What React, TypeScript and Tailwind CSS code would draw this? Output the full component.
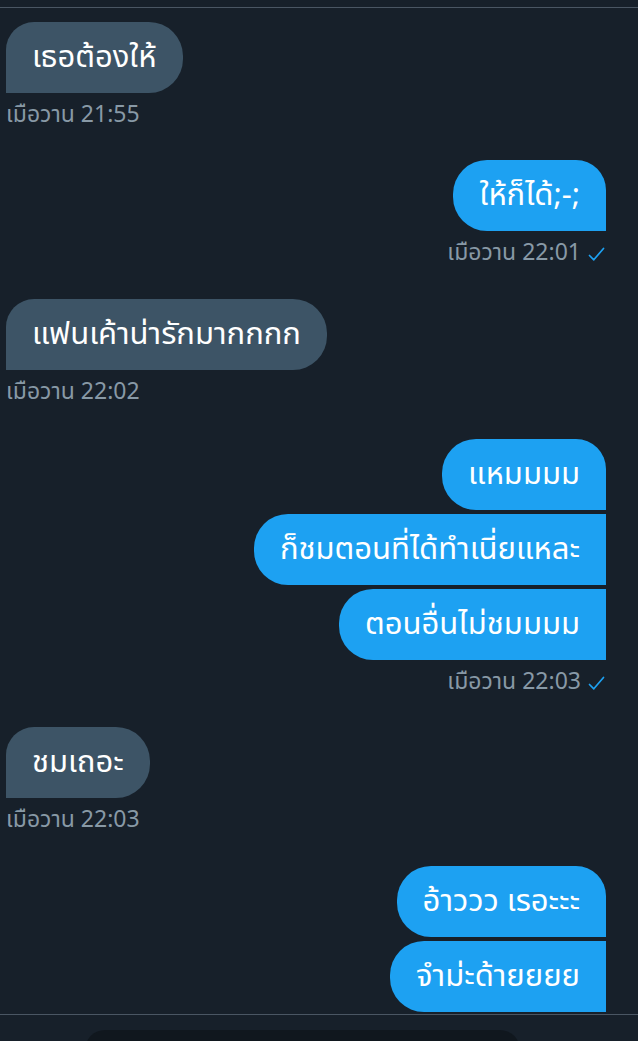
import React from "react";

type Msg = { text: string; shape: string };

const FONT = "font-['Noto_Sans_Thai','Loma','Garuda','Liberation_Sans',sans-serif]";

function Check() {
  return (
    <svg width="17" height="15" viewBox="0 0 17 15" className="ml-[7px] mt-[2px]">
      <path d="M1.5 8.5 L5.8 12.8 L15.5 1.5" fill="none" stroke="#1da1f2" strokeWidth="1.7" strokeLinecap="round" strokeLinejoin="round" />
    </svg>
  );
}

function Stamp({ time, sent }: { time: string; sent?: boolean }) {
  return (
    <div className={`mt-[9px] flex h-[26px] items-center text-[23px] leading-[26px] text-[#8899a6] ${sent ? "justify-end pr-[1px]" : "justify-start"}`}>
      <span>เมือวาน {time}</span>
      {sent && <Check />}
    </div>
  );
}

function Received({ text, time }: { text: string; time: string }) {
  return (
    <div className="flex flex-col items-start pl-[6px]">
      <div className="rounded-tl-[28px] rounded-tr-[34px] rounded-br-[34px] rounded-bl-none bg-[#3d5466] px-[26px] py-[19px] text-[31px] leading-[33px] text-white">
        {text}
      </div>
      <Stamp time={time} />
    </div>
  );
}

function Sent({ msgs, time }: { msgs: Msg[]; time?: string }) {
  return (
    <div className="flex flex-col items-end pr-[32px]">
      <div className="flex flex-col items-end gap-[4px]">
        {msgs.map((m, i) => (
          <div key={i} className={`bg-[#1da1f2] px-[26px] py-[19px] text-[31px] leading-[33px] text-white ${m.shape}`}>
            {m.text}
          </div>
        ))}
      </div>
      {time && <Stamp time={time} sent />}
    </div>
  );
}

const FIRST = "rounded-tl-[34px] rounded-tr-[30px] rounded-bl-[34px] rounded-br-none";
const MID = "rounded-tl-[34px] rounded-bl-[34px] rounded-tr-none rounded-br-none";

export default function App() {
  return (
    <div className={`${FONT} h-[1041px] w-[638px] overflow-hidden bg-[#17202a]`}>
      <div className="h-[7px]" />
      <div className="h-px bg-[#4a5663]" />
      <div className="flex flex-col pt-[14px]">
        <Received text="เธอต้องให้" time="21:55" />
        <div className="h-[32px]" />
        <Sent msgs={[{ text: "ให้ก็ได้;-;", shape: FIRST }]} time="22:01" />
        <div className="h-[33px]" />
        <Received text="แฟนเค้าน่ารักมากกกก" time="22:02" />
        <div className="h-[34px]" />
        <Sent
          msgs={[
            { text: "แหมมมม", shape: FIRST },
            { text: "ก็ชมตอนที่ได้ทำเนี่ยแหละ", shape: MID },
            { text: "ตอนอื่นไม่ชมมมม", shape: MID },
          ]}
          time="22:03"
        />
        <div className="h-[32px]" />
        <Received text="ชมเถอะ" time="22:03" />
        <div className="h-[33px]" />
        <Sent
          msgs={[
            { text: "อ้าววว เรอะะะ", shape: FIRST },
            { text: "จำม่ะด้ายยยย", shape: MID },
          ]}
        />
      </div>
      <div className="mt-[2px] h-px bg-[#4a5663]" />
      <div className="flex justify-start pl-[85px] pt-[15px]">
        <div className="h-[40px] w-[435px] rounded-[22px] bg-[#10171e]" />
      </div>
    </div>
  );
}
